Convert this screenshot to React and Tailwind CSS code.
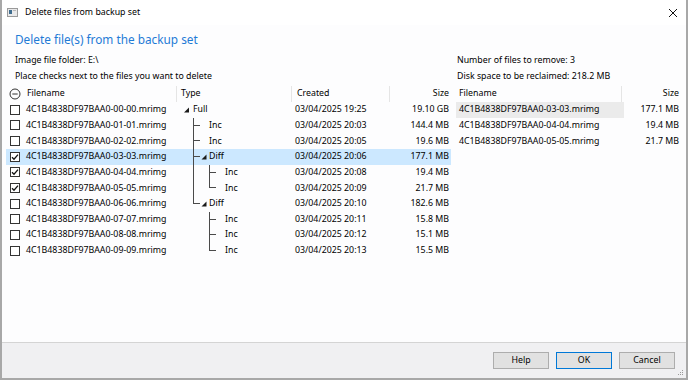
const rows = [
  { id: '00-00', guides: [], root: true, type: 'Full', created: '03/04/2025 19:25', size: '19.10 GB' },
  { id: '01-01', guides: ['tee'], type: 'Inc', created: '03/04/2025 20:03', size: '144.4 MB' },
  { id: '02-02', guides: ['tee'], type: 'Inc', created: '03/04/2025 20:05', size: '19.6 MB' },
  { id: '03-03', guides: ['tee'], expander: true, type: 'Diff', created: '03/04/2025 20:06', size: '177.1 MB', checked: true, selected: true },
  { id: '04-04', guides: ['pipe', 'tee'], type: 'Inc', created: '03/04/2025 20:08', size: '19.4 MB', checked: true },
  { id: '05-05', guides: ['pipe', 'elbow'], type: 'Inc', created: '03/04/2025 20:09', size: '21.7 MB', checked: true },
  { id: '06-06', guides: ['elbow'], expander: true, type: 'Diff', created: '03/04/2025 20:10', size: '182.6 MB' },
  { id: '07-07', guides: ['blank', 'tee'], type: 'Inc', created: '03/04/2025 20:11', size: '15.8 MB' },
  { id: '08-08', guides: ['blank', 'tee'], type: 'Inc', created: '03/04/2025 20:12', size: '15.1 MB' },
  { id: '09-09', guides: ['blank', 'elbow'], type: 'Inc', created: '03/04/2025 20:13', size: '15.5 MB' },
];

const toRemove = [
  { id: '03-03', size: '177.1 MB' },
  { id: '04-04', size: '19.4 MB' },
  { id: '05-05', size: '21.7 MB' },
];

const fileName = (id) => `4C1B4838DF97BAA0-${id}.mrimg`;

// tree connector for one indent level
const Guide = ({ kind, expander, last }) => (
  <svg width="16" height="100%" className="shrink-0" shapeRendering="crispEdges">
    {(kind === 'pipe' || kind === 'tee') && <line x1="0.5" y1="0" x2="0.5" y2="100%" stroke="#4a4a4a" />}
    {kind === 'elbow' && <line x1="0.5" y1="0" x2="0.5" y2="50%" stroke="#4a4a4a" />}
    {(kind === 'tee' || kind === 'elbow') && <line x1="0.5" y1="50%" x2="6.5" y2="50%" stroke="#4a4a4a" />}
    {last && expander && <polygon points="13.5,5.5 13.5,10.5 8.5,10.5" fill="#1a1a1a" shapeRendering="auto" />}
  </svg>
);

const Checkbox = ({ checked }) => (
  <span className="w-[10px] h-[10px] shrink-0 border border-[#333] bg-white flex items-center justify-center">
    {checked && (
      <svg width="8" height="8" viewBox="0 0 8 8">
        <path d="M1 4.2 L3 6.2 L7 1.6" fill="none" stroke="#111" strokeWidth="1.3" />
      </svg>
    )}
  </span>
);

const HeaderCell = ({ className, children }) => (
  <div className={`h-full flex items-center border-r border-[#e5e5e5] ${className}`}>{children}</div>
);

const Button = ({ children, primary }) => (
  <button
    className={`w-[56px] h-[17px] bg-[#e1e1e1] flex items-center justify-center text-black ${
      primary ? 'border-[1.5px] border-[#0078d7]' : 'border border-[#adadad]'
    }`}
  >
    {children}
  </button>
);

export default function App() {
  return (
    <div className="w-[688px] h-[380px] bg-[#fdfdfe] border-x-2 border-b-2 border-[#a8a8a8] flex flex-col font-['Noto_Sans',sans-serif] text-[8.8px] text-black overflow-hidden">
      {/* Title bar */}
      <div className="h-[25px] shrink-0 flex items-center bg-white">
        <svg width="11" height="9" viewBox="0 0 11 9" className="ml-[5px]">
          <rect x="0.5" y="0.5" width="10" height="8" fill="#e9e9ea" stroke="#9a9a9a" />
          <rect x="2" y="2" width="3" height="4" fill="#3f6d8f" />
          <rect x="6" y="2" width="3" height="1" fill="#b8b8b8" />
        </svg>
        <span className="ml-[7px]">Delete files from backup set</span>
        <svg width="10" height="10" viewBox="0 0 10 10" className="ml-auto mr-[8px]">
          <path d="M1 1 L9 9 M9 1 L1 9" stroke="#111" strokeWidth="1" />
        </svg>
      </div>

      {/* Heading */}
      <div className="mt-[7px] pl-[13px] h-[16px] flex items-center text-[11.8px] text-[#1f7bd6]">
        Delete file(s) from the backup set
      </div>

      {/* Info */}
      <div className="mt-[5px] flex">
        <div className="w-[455px] pl-[13px] flex flex-col">
          <span className="h-[16px] flex items-center">Image file folder: E:\</span>
          <span className="h-[16px] flex items-center">Place checks next to the files you want to delete</span>
        </div>
        <div className="flex flex-col">
          <span className="h-[16px] flex items-center">Number of files to remove: 3</span>
          <span className="h-[16px] flex items-center">Disk space to be reclaimed: 218.2 MB</span>
        </div>
      </div>

      {/* Lists */}
      <div className="mt-[1px] flex-1 flex">
        {/* Backup set list */}
        <div className="ml-[4px] w-[445px] flex flex-col">
          <div className="h-[16px] flex">
            <HeaderCell className="w-[171px]">
              <svg width="12" height="12" viewBox="0 0 12 12" className="ml-[3px]">
                <circle cx="6" cy="6" r="5" fill="none" stroke="#333" />
                <line x1="3.3" y1="6" x2="8.7" y2="6" stroke="#333" />
              </svg>
              <span className="ml-[6px]">Filename</span>
            </HeaderCell>
            <HeaderCell className="w-[115px] pl-[4px]">Type</HeaderCell>
            <HeaderCell className="w-[98px] pl-[5px]">Created</HeaderCell>
            <div className="flex-1 flex items-center justify-end pr-[2px]">Size</div>
          </div>
          {rows.map((r) => (
            <div key={r.id} className={`h-[15.67px] flex ${r.selected ? 'bg-[#cce8ff]' : ''}`}>
              <div className="w-[171px] flex items-center">
                <span className="ml-[4px]">
                  <Checkbox checked={r.checked} />
                </span>
                <span className="ml-[6px]">{fileName(r.id)}</span>
              </div>
              <div className="w-[115px] h-full flex items-center pl-[7px]">
                {r.root ? (
                  <svg width="9" height="100%" className="shrink-0">
                    <polygon points="5,5.5 5,10.5 0,10.5" fill="#1a1a1a" />
                  </svg>
                ) : (
                  <span className="w-[9px] shrink-0" />
                )}
                {r.guides.map((g, i) => (
                  <Guide key={i} kind={g} expander={r.expander} last={i === r.guides.length - 1} />
                ))}
                <span>{r.type}</span>
              </div>
              <div className="w-[98px] flex items-center pl-[3px]">{r.created}</div>
              <div className="flex-1 flex items-center justify-end pr-[2px]">{r.size}</div>
            </div>
          ))}
        </div>

        {/* Files to remove */}
        <div className="ml-[3px] w-[228px] flex flex-col">
          <div className="h-[16px] flex">
            <HeaderCell className="w-[168px] pl-[5px]">Filename</HeaderCell>
            <div className="flex-1 flex items-center justify-end pr-[3px]">Size</div>
          </div>
          {toRemove.map((f, i) => (
            <div key={f.id} className="h-[15.67px] flex">
              <div className={`w-[168px] ml-[2px] flex items-center pl-[3px] ${i === 0 ? 'bg-[#ebebeb]' : ''}`}>
                {fileName(f.id)}
              </div>
              <div className="flex-1 flex items-center justify-end pr-[3px]">{f.size}</div>
            </div>
          ))}
        </div>
      </div>

      {/* Footer */}
      <div className="h-[36px] shrink-0 border-t border-[#d4d4d4] bg-[#f0f0f2] flex items-center justify-end pr-[11px] gap-[7px] relative">
        <Button>Help</Button>
        <Button primary>OK</Button>
        <Button>Cancel</Button>
        <svg width="7" height="7" viewBox="0 0 7 7" className="absolute right-[2px] bottom-[2px]">
          <rect x="5" y="1" width="1" height="1" fill="#9a9a9a" />
          <rect x="3" y="3" width="1" height="1" fill="#9a9a9a" />
          <rect x="5" y="3" width="1" height="1" fill="#9a9a9a" />
          <rect x="1" y="5" width="1" height="1" fill="#9a9a9a" />
          <rect x="3" y="5" width="1" height="1" fill="#9a9a9a" />
          <rect x="5" y="5" width="1" height="1" fill="#9a9a9a" />
        </svg>
      </div>
    </div>
  );
}
